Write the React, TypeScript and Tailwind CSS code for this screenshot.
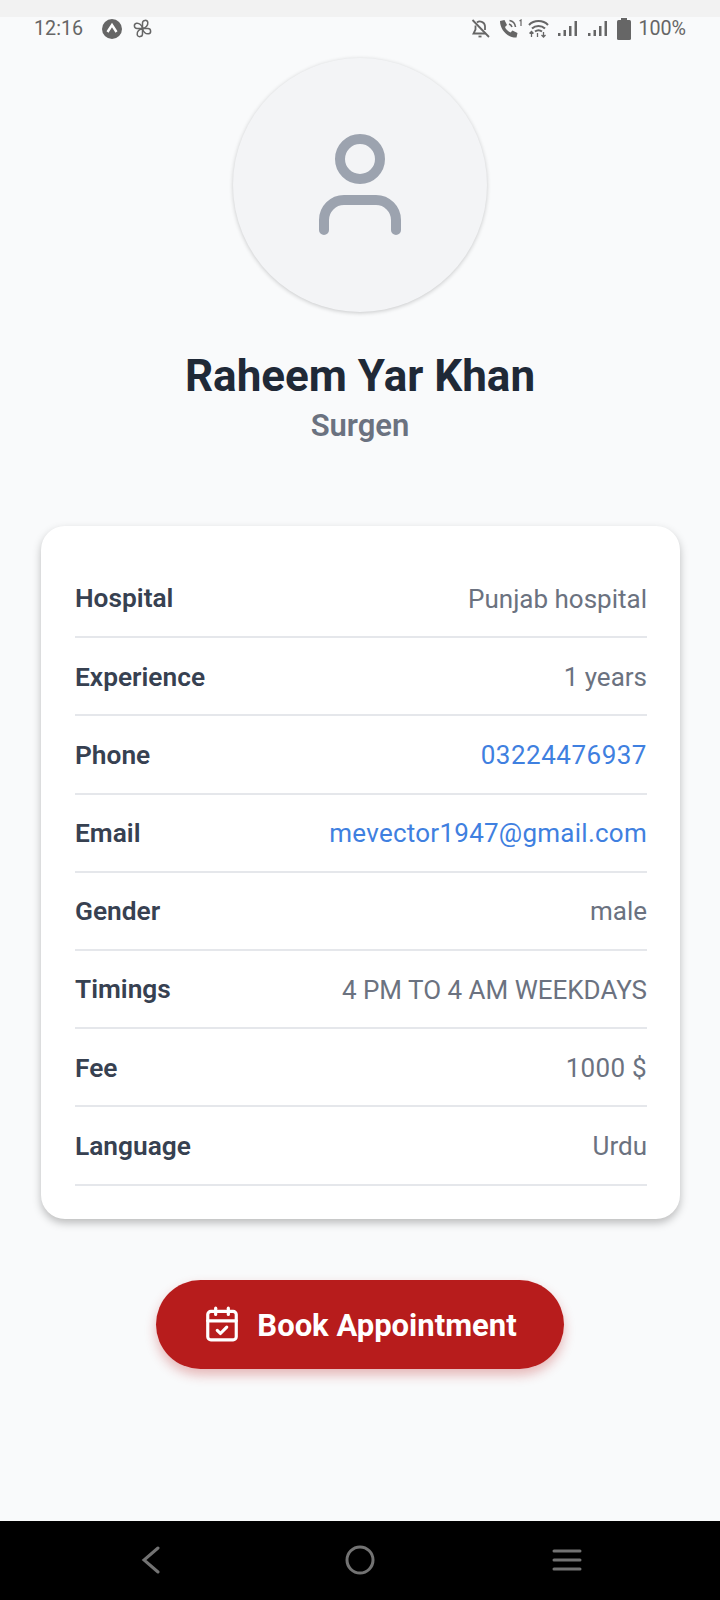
import { CalendarCheck } from "lucide-react";

const rows = [
  { label: "Hospital", value: "Punjab hospital" },
  { label: "Experience", value: "1 years" },
  { label: "Phone", value: "03224476937", link: true, spaced: "tracking-[0.5px]" },
  { label: "Email", value: "mevector1947@gmail.com", link: true, spaced: "tracking-[0.25px]" },
  { label: "Gender", value: "male" },
  { label: "Timings", value: "4 PM TO 4 AM WEEKDAYS" },
  { label: "Fee", value: "1000 $", spaced: "tracking-[0.3px]" },
  { label: "Language", value: "Urdu" },
];

const fanBlade = "M9.5 9.5 L9.5 4 C9.5 0.8 14.3 0.4 14.8 3.5 C15.2 6.5 12.5 9 9.5 9.5 Z";

function SignalIcon() {
  return (
    <svg width="20" height="18" viewBox="0 0 20 18" fill="#666666">
      <rect x="0" y="13" width="2.5" height="3" />
      <rect x="5.5" y="10" width="2.5" height="6" />
      <rect x="11" y="6" width="2.5" height="10" />
      <rect x="16.5" y="1" width="2.5" height="15" />
    </svg>
  );
}

function StatusBar() {
  return (
    <div className="flex h-[23px] items-center justify-between pl-[34px] pr-[34px] text-[19.7px] leading-none text-[#666666]">
      <div className="flex items-center">
        <span>12:16</span>
        {/* app icons */}
        <svg className="ml-[19px]" width="20" height="20" viewBox="0 0 20 20">
          <circle cx="10" cy="10" r="10" fill="#666666" />
          <path d="M5.5 13 L10 6 L14.5 13" fill="none" stroke="#ffffff" strokeWidth="2.4" />
        </svg>
        <svg className="ml-[11px]" width="19" height="19" viewBox="0 0 19 19" fill="none" stroke="#666666" strokeWidth="1.5">
          <path d={fanBlade} />
          <path d={fanBlade} transform="rotate(90 9.5 9.5)" />
          <path d={fanBlade} transform="rotate(180 9.5 9.5)" />
          <path d={fanBlade} transform="rotate(270 9.5 9.5)" />
        </svg>
      </div>
      <div className="flex items-center">
        {/* bell off */}
        <svg width="19" height="19" viewBox="0 0 19 19" fill="none" stroke="#666666" strokeWidth="1.8">
          <path d="M1.5 1 L18 18" />
          <path d="M6 3.5 C8.5 1.5 13.5 2.5 14 7 L14 11 M4.5 6.5 L4.5 10.5 L2.5 14.5 L14.5 14.5" />
          <path d="M7.5 17.5 L10.5 17.5" />
        </svg>
        {/* phone */}
        <svg className="ml-[9px]" width="24" height="20" viewBox="0 0 24 20" fill="none">
          <path d="M1 2 L5.5 1 L8 6 L6 8 C7 10.5 9 12.5 11.5 13.5 L13.5 11.5 L18.5 14 L17.5 18.5 C9 19 1 11 1 2 Z" fill="#666666" />
          <path d="M10.5 1.5 C13.5 2 16 4.5 16.5 8 M10 5 C11.5 5.5 12.5 6.5 13 8" stroke="#666666" strokeWidth="1.6" />
          <path d="M20.5 2 L22 1 L22 7" stroke="#666666" strokeWidth="1.2" />
        </svg>
        {/* wifi */}
        <svg className="ml-[5px]" width="21" height="19" viewBox="0 0 21 19" fill="none" stroke="#666666" strokeWidth="2">
          <path d="M1 6 C6 0.8 15 0.8 20 6" />
          <path d="M4 9.5 C7.5 6 13.5 6 17 9.5" />
          <path d="M7 12.5 C9 11 12 11 14 12.5" />
          <path d="M3.5 12.5 L3.5 18 M1.5 14.5 L3.5 12.5 L5.5 14.5 M9.5 14 L9.5 18 M15.5 13 L15.5 18 M13.5 16 L15.5 18 L17.5 16" strokeWidth="1.3" />
        </svg>
        <div className="ml-[9px]">
          <SignalIcon />
        </div>
        <div className="ml-[10px]">
          <SignalIcon />
        </div>
        {/* battery */}
        <svg className="ml-[9px]" width="14" height="22" viewBox="0 0 14 22" fill="#666666">
          <rect x="4" y="0" width="6" height="3" />
          <rect x="0" y="2" width="14" height="20" rx="1.5" />
        </svg>
        <span className="ml-[7px]">100%</span>
      </div>
    </div>
  );
}

export default function App() {
  return (
    <div className="flex h-[1600px] w-[720px] flex-col overflow-hidden bg-[#f9fafb] font-['Roboto',sans-serif]">
      <div className="h-[17px] bg-[#f2f2f2]" />
      <StatusBar />

      <div className="flex flex-1 flex-col items-center px-[40px]">
        {/* Avatar */}
        <div className="mt-[18px] flex h-[254px] w-[254px] items-center justify-center rounded-full bg-[#f3f4f6] shadow-[0_1px_4px_rgba(0,0,0,0.2)]">
          <svg width="120" height="120" viewBox="0 0 120 120" fill="none" stroke="#9ca3af" strokeWidth="10" strokeLinecap="round">
            <circle cx="60" cy="34" r="20" />
            <path d="M24 105 L24 95 C24 84 33 75 44 75 L76 75 C87 75 96 84 96 95 L96 105" />
          </svg>
        </div>

        <h1 className="mt-[36px] text-[44px] leading-[56px] font-bold text-[#1f2937]">Raheem Yar Khan</h1>
        <p className="mt-[2px] text-[31px] leading-[40px] font-semibold text-[#6b7280]">Surgen</p>

        {/* Details card */}
        <div className="mt-[80px] w-[639px] self-end rounded-[24px] bg-white pl-[34px] pr-[33px] pt-[34px] pb-[33px] shadow-[0_4px_8px_rgba(0,0,0,0.25)]">
          {rows.map((row) => (
            <div key={row.label} className="flex h-[78.2px] items-center justify-between border-b-2 border-[#e5e7eb] pt-[2px]">
              <span className="text-[26.3px] font-semibold text-[#374151]">{row.label}</span>
              <span className={`text-[26px] ${row.link ? "text-[#3f80e0]" : "text-[#6b7280]"} ${row.spaced ?? ""}`}>
                {row.value}
              </span>
            </div>
          ))}
        </div>

        <button className="mt-[61px] flex h-[89px] w-[408px] items-center justify-center gap-[16px] rounded-full bg-[#b71c1c] text-[31px] font-bold text-white shadow-[0_6px_12px_rgba(185,28,28,0.3)]">
          <CalendarCheck size={38} strokeWidth={2} />
          <span className="pt-[5px]">Book Appointment</span>
        </button>
      </div>

      {/* Nav bar */}
      <div className="flex h-[79px] items-center justify-between bg-black pl-[141px] pr-[138px] pb-[2px]">
        <div className="w-[27px]">
          <svg width="20" height="28" viewBox="0 0 20 28" fill="none" stroke="#737373" strokeWidth="3" strokeLinecap="round">
            <path d="M17 2 L3 14 L17 26" />
          </svg>
        </div>
        <svg width="30" height="30" viewBox="0 0 30 30" fill="none" stroke="#737373" strokeWidth="3">
          <circle cx="15" cy="15" r="13" />
        </svg>
        <svg width="30" height="24" viewBox="0 0 30 24" fill="none" stroke="#737373" strokeWidth="3" strokeLinecap="round">
          <path d="M2 3 L28 3 M2 12 L28 12 M2 21 L28 21" />
        </svg>
      </div>
    </div>
  );
}
